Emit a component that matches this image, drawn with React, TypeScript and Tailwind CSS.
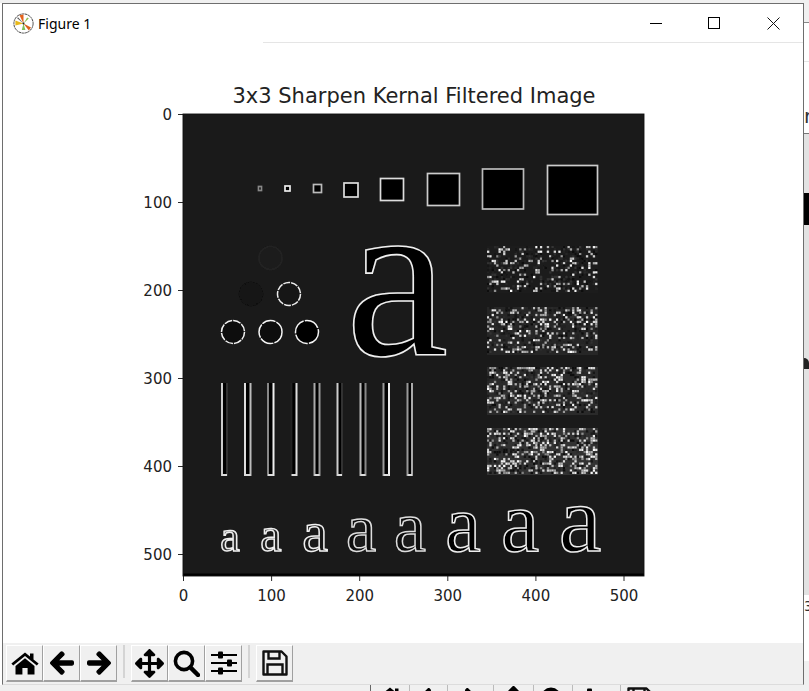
import { ReactNode } from "react";
import { FaArrowLeft, FaArrowRight, FaArrowsAlt } from "react-icons/fa";

const ticksX = [0, 100, 200, 300, 400, 500];
const ticksY = [0, 100, 200, 300, 400, 500];
const tickX = (v: number) => 183.5 + v * 0.881;
const tickY = (v: number) => 114.5 + v * 0.88;

const squares = [
  { x: 258.5, y: 186.5, w: 3, h: 4, c: "#888" },
  { x: 285, y: 186, w: 5, h: 5, c: "#eee" },
  { x: 313.5, y: 184.5, w: 8, h: 8, c: "#bbb" },
  { x: 344, y: 183, w: 14, h: 14, c: "#ddd" },
  { x: 380.5, y: 178.5, w: 23, h: 22, c: "#ddd" },
  { x: 427.5, y: 173.5, w: 32, h: 32, c: "#ccc" },
  { x: 482.5, y: 169, w: 41, h: 40, c: "#bbb" },
  { x: 547.5, y: 165.5, w: 50, h: 49, c: "#ccc" },
];

const circles = [
  { x: 270.5, y: 258, fill: "#1d1d1d", stroke: "#242424", dash: "" },
  { x: 251, y: 294, fill: "#171717", stroke: "#121212", dash: "" },
  { x: 289, y: 294, fill: "#141414", stroke: "#eee", dash: "7 1" },
  { x: 233, y: 332, fill: "#0c0c0c", stroke: "#f2f2f2", dash: "8 1" },
  { x: 270.5, y: 332, fill: "#080808", stroke: "#f5f5f5", dash: "14 1" },
  { x: 307, y: 332, fill: "#000", stroke: "#f5f5f5", dash: "16 1.2" },
];

const bars = [
  { x: 222, w: 5, l: "#ccc", r: "#333" },
  { x: 245, w: 5.5, l: "#ddd", r: "#bbb" },
  { x: 268, w: 5.5, l: "#888", r: "#eee" },
  { x: 291.5, w: 5, l: "#222", r: "#ddd" },
  { x: 314.5, w: 5, l: "#aaa", r: "#999" },
  { x: 337.5, w: 4.5, l: "#ccc", r: "#333" },
  { x: 360.5, w: 5, l: "#bbb", r: "#888" },
  { x: 383.5, w: 5.5, l: "#999", r: "#eee" },
  { x: 407.5, w: 4.5, l: "#999", r: "#aaa" },
];

const letters = [
  { x: 230, size: 44, fill: "#2a2a2a", stroke: "#eee" },
  { x: 271, size: 48, fill: "#222", stroke: "#eee" },
  { x: 315, size: 58, fill: "#141414", stroke: "#f0f0f0" },
  { x: 361, size: 68, fill: "#0c0c0c", stroke: "#ddd" },
  { x: 410, size: 72, fill: "#0a0a0a", stroke: "#ddd" },
  { x: 463, size: 80, fill: "#050505", stroke: "#eee" },
  { x: 520, size: 86, fill: "#000", stroke: "#eee" },
  { x: 580, size: 96, fill: "#000", stroke: "#eee" },
];

const noiseBlocks = [
  { y: 246, h: 47, density: 0.15, base: "#1f1f1f" },
  { y: 307, h: 48, density: 0.22, base: "#262626" },
  { y: 367, h: 48, density: 0.27, base: "#2c2c2c" },
  { y: 428, h: 47, density: 0.3, base: "#303030" },
];

// small seeded generator, the speckle has to stay the same between runs
const makeRandom = (seed: number) => () => {
  seed = (seed * 1664525 + 1013904223) % 4294967296;
  return seed / 4294967296;
};

const NoiseBlock = ({ y, h, density, base, seed }: { y: number; h: number; density: number; base: string; seed: number }) => {
  const random = makeRandom(seed);
  const step = 2.3;
  const cells = [];
  for (let row = 0; row < Math.floor(h / step); row++) {
    for (let col = 0; col < Math.floor(111 / step); col++) {
      const r = random();
      const hit = r < density;
      const dim = r > 0.7;
      if (!hit && !dim) continue;
      const level = hit ? 130 + Math.floor(random() * 125) : 10 + Math.floor(random() * 45);
      cells.push(
        <rect
          key={`${row}-${col}`}
          x={487 + col * step}
          y={y + row * step}
          width={step}
          height={step}
          fill={`rgb(${level},${level},${level})`}
        />
      );
    }
  }
  return (
    <g filter="url(#softer)">
      <rect x={487} y={y} width={111} height={h} fill={base} />
      {cells}
    </g>
  );
};

const Plot = () => (
  <svg className="block" width={800} height={600} viewBox="3 43 800 600">
    <defs>
      <filter id="soft" x="-5%" y="-5%" width="110%" height="110%">
        <feGaussianBlur stdDeviation="0.4" />
      </filter>
      <filter id="softer" x="-5%" y="-5%" width="110%" height="110%">
        <feGaussianBlur stdDeviation="0.7" />
      </filter>
    </defs>
    <text x={414} y={103} textAnchor="middle" fontSize={21} fill="#222" fontFamily="'DejaVu Sans', sans-serif">
      3x3 Sharpen Kernal Filtered Image
    </text>
    <rect x={183} y={114} width={461} height={462} fill="#1a1a1a" />
    <g filter="url(#soft)">
      {squares.map((s, i) => (
        <rect key={i} x={s.x} y={s.y} width={s.w} height={s.h} fill="#000" stroke={s.c} strokeWidth={1.7} />
      ))}
      {circles.map((c, i) => (
        <circle key={i} cx={c.x} cy={c.y} r={11.5} fill={c.fill} stroke={c.stroke} strokeWidth={1.5} strokeDasharray={c.dash} />
      ))}
      {bars.map((b, i) => (
        <g key={i}>
          <rect x={b.x} y={383} width={b.w} height={93} fill="#000" />
          <rect x={b.x - 1} y={383} width={2} height={93} fill={b.l} />
          <rect x={b.x + b.w - 1} y={383} width={2} height={93} fill={b.r} />
          <rect x={b.x} y={474} width={b.w} height={2} fill="#ddd" />
        </g>
      ))}
      <text
        x={397}
        y={355}
        textAnchor="middle"
        fontSize={232}
        fontFamily="'Liberation Serif', serif"
        fill="#000"
        stroke="#f0f0f0"
        strokeWidth={1.6}
      >
        a
      </text>
      {letters.map((l, i) => (
        <text
          key={i}
          x={l.x}
          y={551}
          textAnchor="middle"
          fontSize={l.size}
          fontFamily="'Liberation Serif', serif"
          fill={l.fill}
          stroke={l.stroke}
          strokeWidth={1.5}
        >
          a
        </text>
      ))}
    </g>
    {noiseBlocks.map((n, i) => (
      <NoiseBlock key={i} y={n.y} h={n.h} density={n.density} base={n.base} seed={71 + i * 13} />
    ))}
    <rect x={183} y={573.5} width={461} height={2.5} fill="#000" />
    <rect x={183} y={114} width={461} height={462} fill="none" stroke="#111" strokeWidth={0.9} />
    {ticksX.map((t) => (
      <g key={t}>
        <line x1={tickX(t)} x2={tickX(t)} y1={576} y2={581} stroke="#111" strokeWidth={0.9} />
        <text x={tickX(t)} y={601} textAnchor="middle" fontSize={15} fill="#222" fontFamily="'DejaVu Sans', sans-serif">
          {t}
        </text>
      </g>
    ))}
    {ticksY.map((t) => (
      <g key={t}>
        <line x1={178} x2={183} y1={tickY(t)} y2={tickY(t)} stroke="#111" strokeWidth={0.9} />
        <text x={172} y={tickY(t) + 5.5} textAnchor="end" fontSize={15} fill="#222" fontFamily="'DejaVu Sans', sans-serif">
          {t}
        </text>
      </g>
    ))}
  </svg>
);

const Logo = () => (
  <svg width={21} height={21} viewBox="0 0 21 21">
    <circle cx={10.5} cy={10.5} r={9.6} fill="#fff" stroke="#444" strokeWidth={1} strokeDasharray="2.4 0.5" />
    <path d="M10.5 10.5 L6.5 2.2 L10.5 1.6 Z" fill="#e4631c" />
    <path d="M10.5 10.5 L18 14.5 L15.8 17.4 Z" fill="#d9601a" />
    <path d="M10.5 10.5 L2.4 7.6 L2.4 12.4 Z" fill="#e8b91c" />
    <path d="M10.5 10.5 L14.2 4.5 L15.8 5.6 Z" fill="#8cc152" />
    <path d="M10.5 10.5 L8.8 17 L12.4 17 Z" fill="#7fbf5a" />
    <path d="M10.5 10.5 L5 4.2 L4.2 5.2 Z" fill="#555" />
    <circle cx={10.5} cy={10.5} r={1} fill="#222" />
  </svg>
);

const HomeIcon = () => (
  <svg width={28} height={23} viewBox="0 0 28 23" fill="#000">
    <path d="M14 0.5 L19 4.6 V1.5 H22.5 V7.4 L27.6 11.6 L25.8 13.6 L14 4 L2.2 13.6 L0.4 11.6 Z" />
    <path d="M14 6.2 L23.5 14 V22.5 H16.6 V16 H11.4 V22.5 H4.5 V14 Z" />
  </svg>
);

const SearchIcon = () => (
  <svg width={27} height={27} viewBox="0 0 27 27" fill="none" stroke="#000">
    <circle cx={11} cy={11} r={8.6} strokeWidth={3.6} />
    <path d="M17.4 17.4 L25 25" strokeWidth={4.4} strokeLinecap="round" />
  </svg>
);

const SlidersIcon = () => (
  <svg width={26} height={24} viewBox="0 0 26 24" fill="#000">
    <rect x={0} y={3} width={26} height={2} />
    <rect x={0} y={11} width={26} height={2} />
    <rect x={0} y={19} width={26} height={2} />
    <rect x={7} y={0.5} width={5} height={7} rx={1} />
    <rect x={16} y={8.5} width={5} height={7} rx={1} />
    <rect x={7} y={16.5} width={5} height={7} rx={1} />
  </svg>
);

const SaveIcon = () => (
  <svg width={26} height={26} viewBox="0 0 26 26" fill="none" stroke="#111" strokeWidth={2.4}>
    <path d="M1.5 1.5 H19.5 L24.5 6.5 V24.5 H1.5 Z" strokeLinejoin="round" />
    <path d="M6.5 1.5 V8.5 H17.5 V1.5" />
    <path d="M5.5 24.5 V14.5 H20.5 V24.5" />
  </svg>
);

const ToolButton = ({ children }: { children: ReactNode }) => (
  <div className="w-[37px] h-[37px] flex items-center justify-center bg-[#f0f0f0] border-t border-l border-t-white border-l-white border-r border-r-[#a0a0a0] border-b-2 border-b-[#a0a0a0] text-black">
    {children}
  </div>
);

const Separator = () => <div className="w-0.5 h-[33px] bg-[#d4d4d4] mx-[6px]" />;

const Toolbar = () => (
  <div className="h-[42px] bg-[#f0f0f0] flex items-start pt-[2px] pl-[3px] shrink-0 border-b border-b-[#dcdcdc]">
    <ToolButton><HomeIcon /></ToolButton>
    <ToolButton><FaArrowLeft size={26} stroke="currentColor" strokeWidth={24} /></ToolButton>
    <ToolButton><FaArrowRight size={26} stroke="currentColor" strokeWidth={24} /></ToolButton>
    <Separator />
    <ToolButton><FaArrowsAlt size={29} /></ToolButton>
    <ToolButton><SearchIcon /></ToolButton>
    <ToolButton><SlidersIcon /></ToolButton>
    <Separator />
    <ToolButton><SaveIcon /></ToolButton>
  </div>
);

const TitleBar = () => (
  <div className="h-[38px] flex items-center shrink-0 bg-white">
    <div className="ml-[10px] mr-[4px] flex items-center">
      <Logo />
    </div>
    <span className="text-[14px] text-black font-['Noto_Sans',sans-serif]">Figure 1</span>
    <div className="ml-auto flex items-center pr-[23px]">
      <div className="w-3 h-px bg-black" />
      <div className="w-[12px] h-[12px] border border-black ml-[46px]" />
      <svg className="ml-[47px]" width={13} height={13} viewBox="0 0 13 13" stroke="#111" strokeWidth={1} fill="none">
        <path d="M0.5 0.5 L12.5 12.5 M12.5 0.5 L0.5 12.5" />
      </svg>
    </div>
  </div>
);

const Behind = () => (
  <>
    {/* bits of the window underneath */}
    <div className="absolute left-0 top-0 w-[809px] h-[3px] bg-[#f0f0f0]" />
    <div className="absolute left-[804px] top-0 w-[5px] h-[23px] bg-[#f0f0f0] border-b border-b-[#888]" />
    <div className="absolute left-[804px] top-[61px] w-[5px] h-px bg-[#e5e5e5]" />
    <span className="absolute left-[804px] top-[106px] text-[20px] leading-5 text-[#333] font-['DejaVu_Sans',sans-serif]">r</span>
    <div className="absolute left-[804px] top-[133px] w-[5px] h-[462px] bg-[#e2e2e2] border-t border-t-[#777]" />
    <div className="absolute left-[804px] top-[193px] w-[5px] h-[32px] bg-black" />
    <div className="absolute left-[804px] top-[358px] w-[5px] h-[11px] bg-[#222] rounded-tr-full" />
    <span className="absolute left-[804px] top-[598px] text-[14px] leading-4 text-[#333] font-['DejaVu_Sans',sans-serif]">3</span>
    <div className="absolute left-[804px] top-[661px] w-[5px] h-[30px] bg-[#f0f0f0]" />
    <div className="absolute left-0 top-[685px] w-[809px] h-[6px] bg-[#f0f0f0]" />
    <div className="absolute left-[370px] top-[685px] h-[6px] overflow-hidden flex text-black">
      <div className="w-[39px] h-[37px] flex justify-center pt-[2px] border-l border-l-[#666]"><HomeIcon /></div>
      <div className="w-[38px] h-[37px] flex justify-center pt-[1px] border-l border-l-[#bbb]"><FaArrowLeft size={26} /></div>
      <div className="w-[39px] h-[37px] flex justify-center pt-[1px] border-l border-l-[#bbb]"><FaArrowRight size={26} /></div>
      <div className="w-[7px]" />
      <div className="w-[40px] h-[37px] flex justify-center pt-[1px] border-l border-l-[#bbb]"><FaArrowsAlt size={27} /></div>
      <div className="w-[39px] h-[37px] flex justify-center pt-[2px] border-l border-l-[#bbb]"><SearchIcon /></div>
      <div className="w-[40px] h-[37px] flex justify-center pt-[3px] border-l border-l-[#bbb]"><SlidersIcon /></div>
      <div className="w-[8px]" />
      <div className="w-[38px] h-[37px] flex justify-center pt-[2px] border-l border-l-[#bbb]"><SaveIcon /></div>
    </div>
  </>
);

export default function App() {
  return (
    <div className="relative w-[809px] h-[691px] overflow-hidden bg-white">
      <Behind />
      <div className="absolute left-[2px] top-[3px] w-[802px] h-[682px] flex flex-col bg-white border border-[#6e6e6e] border-b-[#cfcfcf]">
        <TitleBar />
        <div className="relative flex-1 border-t border-t-[#e5e5e5]">
          {/* title bar rule only shows from x 263 on */}
          <div className="absolute left-0 top-[-1px] w-[260px] h-px bg-white" />
          <Plot />
        </div>
        <Toolbar />
      </div>
    </div>
  );
}
